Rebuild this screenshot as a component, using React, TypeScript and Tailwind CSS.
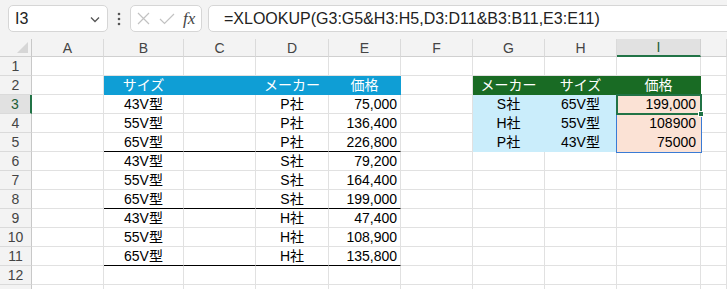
import React from "react";

type Kind = "" | "c" | "r" | "bh" | "gh" | "lb" | "pe";
type CellDef = { t?: string; k?: Kind; bb?: boolean };

const FONT = { fontFamily: '"Liberation Sans", "Noto Sans CJK JP", sans-serif' };

function cellClass(k: Kind, bb: boolean) {
  const base =
    "h-[19px] border-r border-b flex items-center overflow-hidden whitespace-nowrap text-[14px] leading-none";
  let kind = "border-r-[#e1e1e1] text-black";
  if (k === "c") kind = "border-r-[#e1e1e1] text-black justify-center";
  if (k === "r") kind = "border-r-[#e1e1e1] text-black justify-end pr-[3px]";
  if (k === "bh") kind = "bg-[#0f9ed5] border-r-[#0f9ed5] text-white justify-center";
  if (k === "gh") kind = "bg-[#196b24] border-r-[#196b24] text-white justify-center";
  if (k === "lb") kind = "bg-[#caedfb] border-r-[#caedfb] text-black justify-center";
  if (k === "pe") kind = "bg-[#fbe2d5] border-r-[#fbe2d5] text-black justify-end pr-[4px]";
  let bottom = "border-b-[#e1e1e1]";
  if (k === "bh") bottom = "border-b-[#0f9ed5]";
  if (k === "gh") bottom = "border-b-[#196b24]";
  if (k === "lb") bottom = "border-b-[#caedfb]";
  if (k === "pe") bottom = "border-b-[#fbe2d5]";
  if (bb) bottom = "border-b-black";
  return base + " " + kind + " " + bottom;
}

const COLS = ["A", "B", "C", "D", "E", "F", "G", "H", "I", ""];

const sizes = ["43V型", "55V型", "65V型"];
const makers = ["P社", "P社", "P社", "S社", "S社", "S社", "H社", "H社", "H社"];
const prices = ["75,000", "136,400", "226,800", "79,200", "164,400", "199,000", "47,400", "108,900", "135,800"];

function buildRows(): CellDef[][] {
  const rows: CellDef[][] = [];
  const empty = (): CellDef[] => Array.from({ length: 10 }, () => ({ k: "" as Kind }));
  rows.push(empty());
  const r2 = empty();
  r2[1] = { t: "サイズ", k: "bh" };
  r2[2] = { k: "bh" };
  r2[3] = { t: "メーカー", k: "bh" };
  r2[4] = { t: "価格", k: "bh" };
  r2[6] = { t: "メーカー", k: "gh" };
  r2[7] = { t: "サイズ", k: "gh" };
  r2[8] = { t: "価格", k: "gh" };
  rows.push(r2);
  const right = [
    ["S社", "65V型", "199,000"],
    ["H社", "55V型", "108900"],
    ["P社", "43V型", "75000"],
  ];
  for (let i = 0; i < 9; i++) {
    const r = empty();
    const bb = i % 3 === 2;
    r[1] = { t: sizes[i % 3], k: "c", bb };
    r[2] = { k: "", bb };
    r[3] = { t: makers[i], k: "c", bb };
    r[4] = { t: prices[i], k: "r", bb };
    if (i < 3) {
      r[6] = { t: right[i][0], k: "lb" };
      r[7] = { t: right[i][1], k: "lb" };
      r[8] = { t: right[i][2], k: "pe" };
    }
    rows.push(r);
  }
  rows.push(empty());
  rows.push(empty());
  return rows;
}

export default function App() {
  const rows = buildRows();
  return (
    <div className="w-[727px] h-[289px] overflow-hidden bg-white" style={FONT}>
      {/* formula bar */}
      <div className="h-[39px] bg-[#f3f3f3] flex items-start pt-[5px] pl-[8px] overflow-hidden">
        <div className="shrink-0 w-[100px] h-[27px] rounded-[5px] border border-[#d6d6d6] bg-white flex items-center pl-[6px] pr-[6px]">
          <span className="text-[16px] text-[#222] leading-none">I3</span>
          <svg className="ml-auto" width="12" height="12" viewBox="0 0 12 12">
            <path d="M2 4.5 L6 8.5 L10 4.5" fill="none" stroke="#555" strokeWidth="1.3" />
          </svg>
        </div>
        <div className="shrink-0 w-[22px] h-[27px] flex items-center justify-center">
          <svg width="4" height="14" viewBox="0 0 4 14">
            <circle cx="2" cy="2" r="1.3" fill="#555" />
            <circle cx="2" cy="7" r="1.3" fill="#555" />
            <circle cx="2" cy="12" r="1.3" fill="#555" />
          </svg>
        </div>
        <div className="shrink-0 w-[72px] h-[27px] rounded-[5px] border border-[#d6d6d6] bg-white flex items-center pl-[6px]">
          <svg width="13" height="13" viewBox="0 0 13 13">
            <path d="M1 1 L12 12 M12 1 L1 12" stroke="#c2c2c2" strokeWidth="1.2" />
          </svg>
          <svg className="ml-[9px]" width="16" height="12" viewBox="0 0 16 12">
            <path d="M1 6 L5.5 10.5 L15 1" fill="none" stroke="#c2c2c2" strokeWidth="1.2" />
          </svg>
          <span
            className="ml-[8px] text-[17px] italic text-[#444] leading-none"
            style={{ fontFamily: '"Liberation Serif", "DejaVu Serif", serif' }}
          >
            fx
          </span>
        </div>
        <div className="shrink-0 ml-[6px] w-[540px] h-[27px] rounded-l-[5px] border border-[#d6d6d6] bg-white flex items-center pl-[15px]">
          <span className="text-[16px] text-[#222] leading-none whitespace-nowrap">
            =XLOOKUP(G3:G5&amp;H3:H5,D3:D11&amp;B3:B11,E3:E11)
          </span>
        </div>
      </div>

      {/* sheet grid */}
      <div className="relative grid grid-cols-[32px_72px_80px_72px_73px_72px_72px_72px_72px_84px_1fr]">
        <div className="relative h-[18px] bg-[#f3f3f3] border-r border-b border-r-[#c8c8c8] border-b-[#d0d0d0]">
          <svg className="absolute right-[3px] bottom-[3px]" width="11" height="11" viewBox="0 0 11 11">
            <path d="M11 0 L11 11 L0 11 Z" fill="#d6d6d6" />
          </svg>
        </div>
        {COLS.map((c, i) =>
          c === "I" ? (
            <div
              key={i}
              className="h-[18px] bg-[#e1e1e1] border-r border-r-[#d0d0d0] border-b-2 border-b-[#217346] flex items-center justify-center text-[14px] text-[#1d5e38] leading-none"
            >
              {c}
            </div>
          ) : (
            <div
              key={i}
              className="h-[18px] bg-[#f3f3f3] border-r border-b border-r-[#dadada] border-b-[#d0d0d0] flex items-center justify-center text-[14px] text-[#444] leading-none"
            >
              {c}
            </div>
          )
        )}
        {rows.map((r, ri) => (
          <React.Fragment key={ri}>
            {ri === 2 ? (
              <div className="h-[19px] bg-[#e1e1e1] border-r-2 border-b border-r-[#217346] border-b-[#dadada] flex items-center justify-center text-[14px] text-[#1d5e38] leading-none">
                {ri + 1}
              </div>
            ) : (
              <div className="h-[19px] bg-[#f3f3f3] border-r border-b border-r-[#c8c8c8] border-b-[#dadada] flex items-center justify-center text-[14px] text-[#444] leading-none">
                {ri < 12 ? ri + 1 : ""}
              </div>
            )}
            {r.map((cell, ci) => (
              <div key={ci} className={cellClass(cell.k || "", !!cell.bb)}>
                {cell.t}
              </div>
            ))}
          </React.Fragment>
        ))}

        <div className="absolute left-[616px] top-[75px] w-[86px] h-[39px] border border-[#3a7bd5] pointer-events-none" />
        <div className="absolute left-[616px] top-[55px] w-[86px] h-[21px] border-2 border-[#217346] pointer-events-none" />
        <div className="absolute left-[698px] top-[72px] w-[6px] h-[6px] bg-[#217346] border border-white pointer-events-none" />
      </div>
    </div>
  );
}
